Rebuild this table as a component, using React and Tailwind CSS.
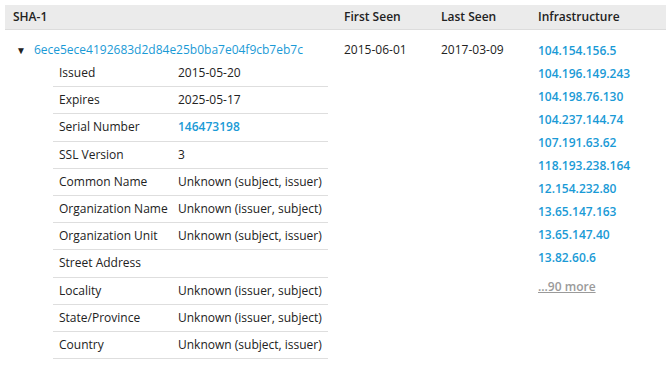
const certFields = [
  { label: "Issued", value: "2015-05-20" },
  { label: "Expires", value: "2025-05-17" },
  { label: "Serial Number", value: "146473198", link: true },
  { label: "SSL Version", value: "3" },
  { label: "Common Name", value: "Unknown (subject, issuer)" },
  { label: "Organization Name", value: "Unknown (issuer, subject)" },
  { label: "Organization Unit", value: "Unknown (subject, issuer)" },
  { label: "Street Address", value: "" },
  { label: "Locality", value: "Unknown (issuer, subject)" },
  { label: "State/Province", value: "Unknown (issuer, subject)" },
  { label: "Country", value: "Unknown (subject, issuer)" },
];

const ips = [
  "104.154.156.5",
  "104.196.149.243",
  "104.198.76.130",
  "104.237.144.74",
  "107.191.63.62",
  "118.193.238.164",
  "12.154.232.80",
  "13.65.147.163",
  "13.65.147.40",
  "13.82.60.6",
];

export default function App() {
  return (
    <div
      className="w-[672px] h-[368px] bg-white text-[12px] text-[#222] overflow-hidden"
      style={{ fontFamily: '"Open Sans", "Liberation Sans", sans-serif' }}
    >
      <div className="ml-[5px] mr-[6px] pt-[5px]">
        {/* header */}
        <div className="flex h-[25px] items-center bg-[#ebebeb] border-b border-[#dcdcdc] font-semibold">
          <div className="w-[331px] pl-[8px]">SHA-1</div>
          <div className="w-[97px] pl-[8px]">First Seen</div>
          <div className="w-[97px] pl-[8px]">Last Seen</div>
          <div className="flex-1 pl-[8px]">Infrastructure</div>
        </div>

        {/* row */}
        <div className="flex pt-[10px]">
          <div className="w-[331px]">
            <div className="flex items-center h-[20px] pl-[11px]">
              <span className="text-[10px] mr-[8px] text-[#222]">▼</span>
              <a className="text-[#1a9ad6]">6ece5ece4192683d2d84e25b0ba7e04f9cb7eb7c</a>
            </div>
            <div className="ml-[48px] w-[275px]">
              {certFields.map((f) => (
                <div
                  key={f.label}
                  className="flex items-center h-[27.2px] border-b border-[#dedede]"
                >
                  <div className="w-[119px] pl-[6px]">{f.label}</div>
                  <div className="flex-1 pl-[6px]">
                    {f.link ? (
                      <span className="text-[#1a9ad6] font-semibold">{f.value}</span>
                    ) : (
                      f.value
                    )}
                  </div>
                </div>
              ))}
            </div>
          </div>
          <div className="w-[97px] pl-[8px] leading-[18px] pt-[1px]">2015-06-01</div>
          <div className="w-[97px] pl-[8px] leading-[18px] pt-[1px]">2017-03-09</div>
          <div className="flex-1 pl-[8px] pt-[1px]">
            {ips.map((ip) => (
              <div key={ip} className="h-[23px] leading-[20px] font-semibold text-[#1a9ad6]">
                {ip}
              </div>
            ))}
            <div className="mt-[7px] font-semibold text-[#9a9a9a] underline">...90 more</div>
          </div>
        </div>
      </div>
    </div>
  );
}
